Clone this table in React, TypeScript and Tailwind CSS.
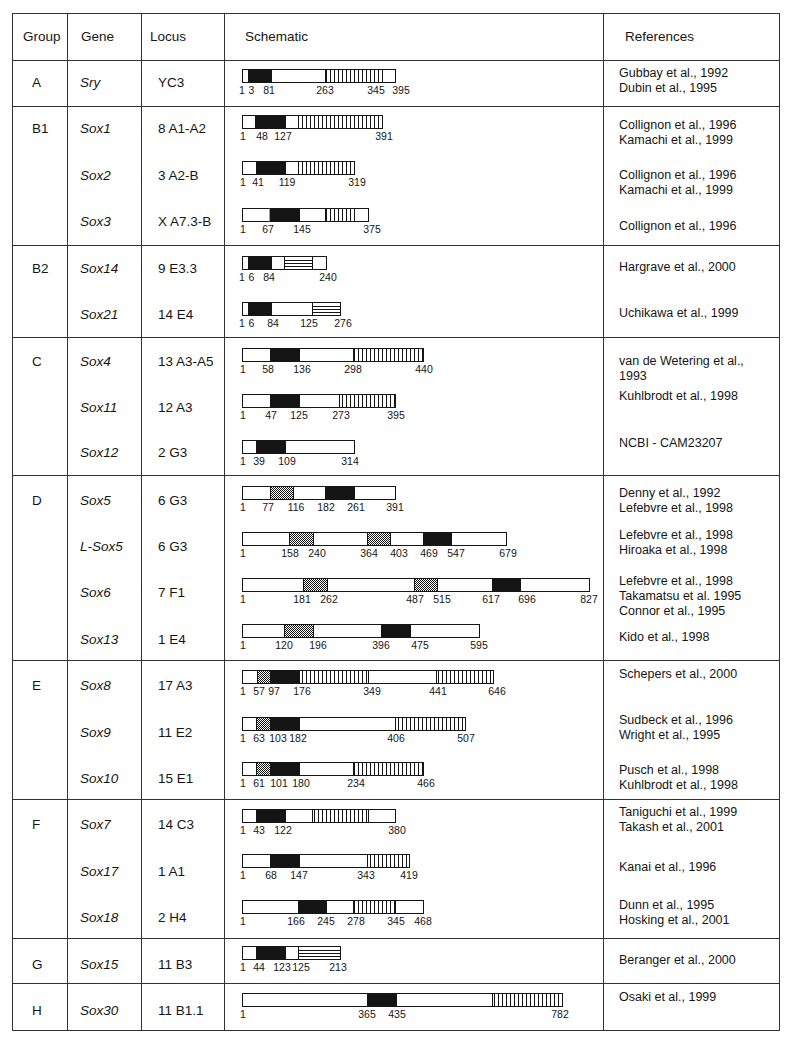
import React from "react";

type SegType = "b" | "v" | "h" | "c" | "g";
type Seg = [number, number, SegType];
type Row = {
  gene: string;
  locus: string;
  h: string;
  gpt: string;
  bpt: string;
  rpt: string;
  refs: string[];
  w: number;
  segs: Seg[];
  labels: [number, string][];
};
type Section = { group: string; gpt: string; last?: boolean; rows: Row[] };

const sections: Section[] = [
  {
    group: "A",
    gpt: "pt-[14px]",
    rows: [
      {
        gene: "Sry", locus: "YC3", h: "h-[45px]", gpt: "pt-[14px]", bpt: "pt-[8px]", rpt: "pt-[5px]",
        refs: ["Gubbay et al., 1992", "Dubin et al., 1995"],
        w: 153, segs: [[6, 29, "b"], [83, 140, "v"]],
        labels: [[0, "1"], [9.5, "3"], [27, "81"], [83, "263"], [134, "345"], [159, "395"]],
      },
    ],
  },
  {
    group: "B1",
    gpt: "pt-[14px]",
    rows: [
      {
        gene: "Sox1", locus: "8 A1-A2", h: "h-[46px]", gpt: "pt-[14px]", bpt: "pt-[8px]", rpt: "pt-[11px]",
        refs: ["Collignon et al., 1996", "Kamachi et al., 1999"],
        w: 140, segs: [[13, 43, "b"], [56, 140, "v"]],
        labels: [[1, "1"], [20, "48"], [41, "127"], [142, "391"]],
      },
      {
        gene: "Sox2", locus: "3 A2-B", h: "h-[46px]", gpt: "pt-[15px]", bpt: "pt-[8px]", rpt: "pt-[15px]",
        refs: ["Collignon et al., 1996", "Kamachi et al., 1999"],
        w: 112, segs: [[14, 43, "b"], [56, 112, "v"]],
        labels: [[1, "1"], [16, "41"], [45, "119"], [115, "319"]],
      },
      {
        gene: "Sox3", locus: "X A7.3-B", h: "h-[46px]", gpt: "pt-[15px]", bpt: "pt-[9px]", rpt: "pt-[20px]",
        refs: ["Collignon et al., 1996"],
        w: 126, segs: [[27, 27, "g"], [28, 57, "b"], [83, 112, "v"]],
        labels: [[1, "1"], [26, "67"], [60, "145"], [130, "375"]],
      },
    ],
  },
  {
    group: "B2",
    gpt: "pt-[15px]",
    rows: [
      {
        gene: "Sox14", locus: "9 E3.3", h: "h-[46px]", gpt: "pt-[15px]", bpt: "pt-[10px]", rpt: "pt-[14px]",
        refs: ["Hargrave et al., 2000"],
        w: 84, segs: [[6, 29, "b"], [42, 70, "h"]],
        labels: [[0, "1"], [9.5, "6"], [27, "84"], [86, "240"]],
      },
      {
        gene: "Sox21", locus: "14 E4", h: "h-[45px]", gpt: "pt-[15px]", bpt: "pt-[10px]", rpt: "pt-[14px]",
        refs: ["Uchikawa et al., 1999"],
        w: 98, segs: [[6, 29, "b"], [70, 98, "h"]],
        labels: [[0, "1"], [9.5, "6"], [31, "84"], [67, "125"], [101, "276"]],
      },
    ],
  },
  {
    group: "C",
    gpt: "pt-[16px]",
    rows: [
      {
        gene: "Sox4", locus: "13 A3-A5", h: "h-[46px]", gpt: "pt-[16px]", bpt: "pt-[10px]", rpt: "pt-[16px]",
        refs: ["van de Wetering et al.,", "1993"],
        w: 181, segs: [[28, 57, "b"], [111, 181, "v"]],
        labels: [[1, "1"], [26, "58"], [60, "136"], [111, "298"], [182, "440"]],
      },
      {
        gene: "Sox11", locus: "12 A3", h: "h-[46px]", gpt: "pt-[16px]", bpt: "pt-[10px]", rpt: "pt-[5px]",
        refs: ["Kuhlbrodt et al., 1998"],
        w: 153, segs: [[28, 57, "b"], [97, 153, "v"]],
        labels: [[1, "1"], [29, "47"], [57, "125"], [99, "273"], [154, "395"]],
      },
      {
        gene: "Sox12", locus: "2 G3", h: "h-[45px]", gpt: "pt-[15px]", bpt: "pt-[10px]", rpt: "pt-[6px]",
        refs: ["NCBI - CAM23207"],
        w: 112, segs: [[14, 43, "b"]],
        labels: [[1, "1"], [17, "39"], [45, "109"], [108, "314"]],
      },
    ],
  },
  {
    group: "D",
    gpt: "pt-[17px]",
    rows: [
      {
        gene: "Sox5", locus: "6 G3", h: "h-[46px]", gpt: "pt-[17px]", bpt: "pt-[10px]", rpt: "pt-[10px]",
        refs: ["Denny et al., 1992", "Lefebvre et al., 1998"],
        w: 153, segs: [[28, 51, "c"], [83, 112, "b"]],
        labels: [[1, "1"], [26, "77"], [54, "116"], [84, "182"], [114, "261"], [153, "391"]],
      },
      {
        gene: "L-Sox5", locus: "6 G3", h: "h-[46px]", gpt: "pt-[17px]", bpt: "pt-[10px]", rpt: "pt-[6px]",
        refs: ["Lefebvre et al., 1998", "Hiroaka et al., 1998"],
        w: 264, segs: [[47, 71, "c"], [125, 148, "c"], [181, 209, "b"]],
        labels: [[1, "1"], [48, "158"], [75, "240"], [127, "364"], [157, "403"], [187, "469"], [214, "547"], [266, "679"]],
      },
      {
        gene: "Sox6", locus: "7 F1", h: "h-[46px]", gpt: "pt-[17px]", bpt: "pt-[10px]", rpt: "pt-[6px]",
        refs: ["Lefebvre et al., 1998", "Takamatsu et al. 1995", "Connor et al., 1995"],
        w: 347, segs: [[61, 85, "c"], [172, 195, "c"], [250, 278, "b"]],
        labels: [[1, "1"], [60, "181"], [87, "262"], [173, "487"], [200, "515"], [249, "617"], [285, "696"], [347, "827"]],
      },
      {
        gene: "Sox13", locus: "1 E4", h: "h-[46px]", gpt: "pt-[18px]", bpt: "pt-[10px]", rpt: "pt-[16px]",
        refs: ["Kido et al., 1998"],
        w: 237, segs: [[42, 71, "c"], [139, 168, "b"]],
        labels: [[1, "1"], [42, "120"], [76, "196"], [139, "396"], [178, "475"], [237, "595"]],
      },
    ],
  },
  {
    group: "E",
    gpt: "pt-[17px]",
    rows: [
      {
        gene: "Sox8", locus: "17 A3", h: "h-[46px]", gpt: "pt-[17px]", bpt: "pt-[9px]", rpt: "pt-[6px]",
        refs: ["Schepers et al., 2000"],
        w: 251, segs: [[15, 28, "c"], [28, 57, "b"], [57, 126, "v"], [194, 251, "v"]],
        labels: [[1, "1"], [17, "57"], [32, "97"], [60, "176"], [130, "349"], [196, "441"], [255, "646"]],
      },
      {
        gene: "Sox9", locus: "11 E2", h: "h-[46px]", gpt: "pt-[18px]", bpt: "pt-[10px]", rpt: "pt-[6px]",
        refs: ["Sudbeck et al., 1996", "Wright et al., 1995"],
        w: 223, segs: [[14, 28, "c"], [28, 57, "b"], [153, 223, "v"]],
        labels: [[1, "1"], [17, "63"], [36, "103"], [56, "182"], [154, "406"], [224, "507"]],
      },
      {
        gene: "Sox10", locus: "15 E1", h: "h-[46px]", gpt: "pt-[18px]", bpt: "pt-[9px]", rpt: "pt-[10px]",
        refs: ["Pusch et al., 1998", "Kuhlbrodt et al., 1998"],
        w: 181, segs: [[14, 28, "c"], [28, 57, "b"], [111, 181, "v"]],
        labels: [[1, "1"], [17, "61"], [37, "101"], [59, "180"], [114, "234"], [184, "466"]],
      },
    ],
  },
  {
    group: "F",
    gpt: "pt-[17px]",
    rows: [
      {
        gene: "Sox7", locus: "14 C3", h: "h-[46px]", gpt: "pt-[17px]", bpt: "pt-[9px]", rpt: "pt-[5px]",
        refs: ["Taniguchi et al., 1999", "Takash et al., 2001"],
        w: 153, segs: [[14, 43, "b"], [70, 126, "v"]],
        labels: [[1, "1"], [17, "43"], [41, "122"], [155, "380"]],
      },
      {
        gene: "Sox17", locus: "1 A1", h: "h-[46px]", gpt: "pt-[18px]", bpt: "pt-[8px]", rpt: "pt-[14px]",
        refs: ["Kanai et al., 1996"],
        w: 167, segs: [[28, 57, "b"], [125, 167, "v"]],
        labels: [[1, "1"], [29, "68"], [57, "147"], [124, "343"], [167, "419"]],
      },
      {
        gene: "Sox18", locus: "2 H4", h: "h-[46px]", gpt: "pt-[18px]", bpt: "pt-[8px]", rpt: "pt-[6px]",
        refs: ["Dunn et al., 1995", "Hosking et al., 2001"],
        w: 181, segs: [[56, 84, "b"], [111, 153, "v"]],
        labels: [[1, "1"], [54, "166"], [84, "245"], [114, "278"], [154, "345"], [181, "468"]],
      },
    ],
  },
  {
    group: "G",
    gpt: "pt-[18px]",
    rows: [
      {
        gene: "Sox15", locus: "11 B3", h: "h-[44px]", gpt: "pt-[18px]", bpt: "pt-[7px]", rpt: "pt-[14px]",
        refs: ["Beranger et al., 2000"],
        w: 98, segs: [[14, 43, "b"], [56, 98, "h"]],
        labels: [[1, "1"], [17, "44"], [40, "123"], [59, "125"], [96, "213"]],
      },
    ],
  },
  {
    group: "H",
    gpt: "pt-[19px]",
    last: true,
    rows: [
      {
        gene: "Sox30", locus: "11 B1.1", h: "h-[46px]", gpt: "pt-[19px]", bpt: "pt-[9px]", rpt: "pt-[6px]",
        refs: ["Osaki et al., 1999"],
        w: 320, segs: [[125, 154, "b"], [250, 320, "v"]],
        labels: [[1, "1"], [125, "365"], [155, "435"], [318, "782"]],
      },
    ],
  },
];

const INK = "#151515";

function Bar({ id, w, segs, labels }: { id: string; w: number; segs: Seg[]; labels: [number, string][] }) {
  return (
    <svg width={360} height={30} className="block overflow-visible">
      <defs>
        <pattern id={`v-${id}`} width="4" height="14" patternUnits="userSpaceOnUse">
          <rect width="4" height="14" fill="#fff" />
          <rect x="0" width="1" height="14" fill={INK} />
        </pattern>
        <pattern id={`c-${id}`} width="2" height="2" patternUnits="userSpaceOnUse">
          <rect width="2" height="2" fill="#fff" />
          <rect width="1" height="1" fill={INK} />
          <rect x="1" y="1" width="1" height="1" fill={INK} />
        </pattern>
      </defs>
      <rect x={0.5} y={0.5} width={w} height={13} fill="#fff" stroke={INK} strokeWidth={1} />
      {segs.map(([s, e, t], i) => {
        if (t === "g") {
          return <line key={i} x1={s + 0.5} x2={s + 0.5} y1={0.5} y2={13.5} stroke="#999" strokeWidth={1} />;
        }
        if (t === "h") {
          return (
            <g key={i}>
              <rect x={s + 0.5} y={0.5} width={e - s} height={13} fill="#fff" stroke={INK} strokeWidth={1} />
              {[4.5, 7.5, 10.5].map((y) => (
                <line key={y} x1={s + 0.5} x2={e + 0.5} y1={y} y2={y} stroke={INK} strokeWidth={1} />
              ))}
            </g>
          );
        }
        const fill = t === "b" ? INK : t === "v" ? `url(#v-${id})` : `url(#c-${id})`;
        return <rect key={i} x={s + 0.5} y={0.5} width={e - s} height={13} fill={fill} stroke={INK} strokeWidth={1} />;
      })}
      {labels.map(([x, t], i) => (
        <text
          key={i}
          x={x}
          y={25}
          textAnchor="middle"
          fontSize={10.5}
          fill={INK}
          fontFamily="'Liberation Sans', Arial, sans-serif"
        >
          {t}
        </text>
      ))}
    </svg>
  );
}

export default function App() {
  return (
    <div className="min-h-[1044px] w-[800px] bg-white pl-[12px] pt-[13px] font-['Liberation_Sans',Arial,sans-serif] text-[#151515]">
      <div className="w-[768px] border border-[#333]">
        {/* header */}
        <div className="flex h-[47px] border-b border-[#333] text-[13.5px] leading-[16px]">
          <div className="flex w-[55px] items-center border-r border-[#333] pl-[10px]">Group</div>
          <div className="flex w-[74px] items-center border-r border-[#333] pl-[13px]">Gene</div>
          <div className="flex w-[83px] items-center border-r border-[#333] pl-[8px]">Locus</div>
          <div className="flex w-[379px] items-center border-r border-[#333] pl-[20px]">Schematic</div>
          <div className="flex flex-1 items-center pl-[21px]">References</div>
        </div>
        {sections.map((sec) => (
          <div key={sec.group} className={`flex ${sec.last ? "" : "border-b border-[#333]"}`}>
            <div className={`w-[55px] border-r border-[#333] pl-[19px] text-[13.5px] leading-[16px] ${sec.gpt}`}>
              {sec.group}
            </div>
            <div className="flex flex-1 flex-col">
              {sec.rows.map((r) => (
                <div key={r.gene} className={`flex ${r.h}`}>
                  <div className={`w-[74px] border-r border-[#333] pl-[12px] text-[13.5px] italic leading-[16px] ${r.gpt}`}>
                    {r.gene}
                  </div>
                  <div className={`w-[83px] whitespace-nowrap border-r border-[#333] pl-[16px] text-[13.5px] leading-[16px] ${r.gpt}`}>
                    {r.locus}
                  </div>
                  <div className={`w-[379px] border-r border-[#333] pl-[17px] ${r.bpt}`}>
                    <Bar id={r.gene} w={r.w} segs={r.segs} labels={r.labels} />
                  </div>
                  <div className={`flex-1 pl-[15px] text-[12.5px] leading-[15px] ${r.rpt}`}>
                    {r.refs.map((t) => (
                      <div key={t} className="whitespace-nowrap">
                        {t}
                      </div>
                    ))}
                  </div>
                </div>
              ))}
            </div>
          </div>
        ))}
      </div>
    </div>
  );
}
